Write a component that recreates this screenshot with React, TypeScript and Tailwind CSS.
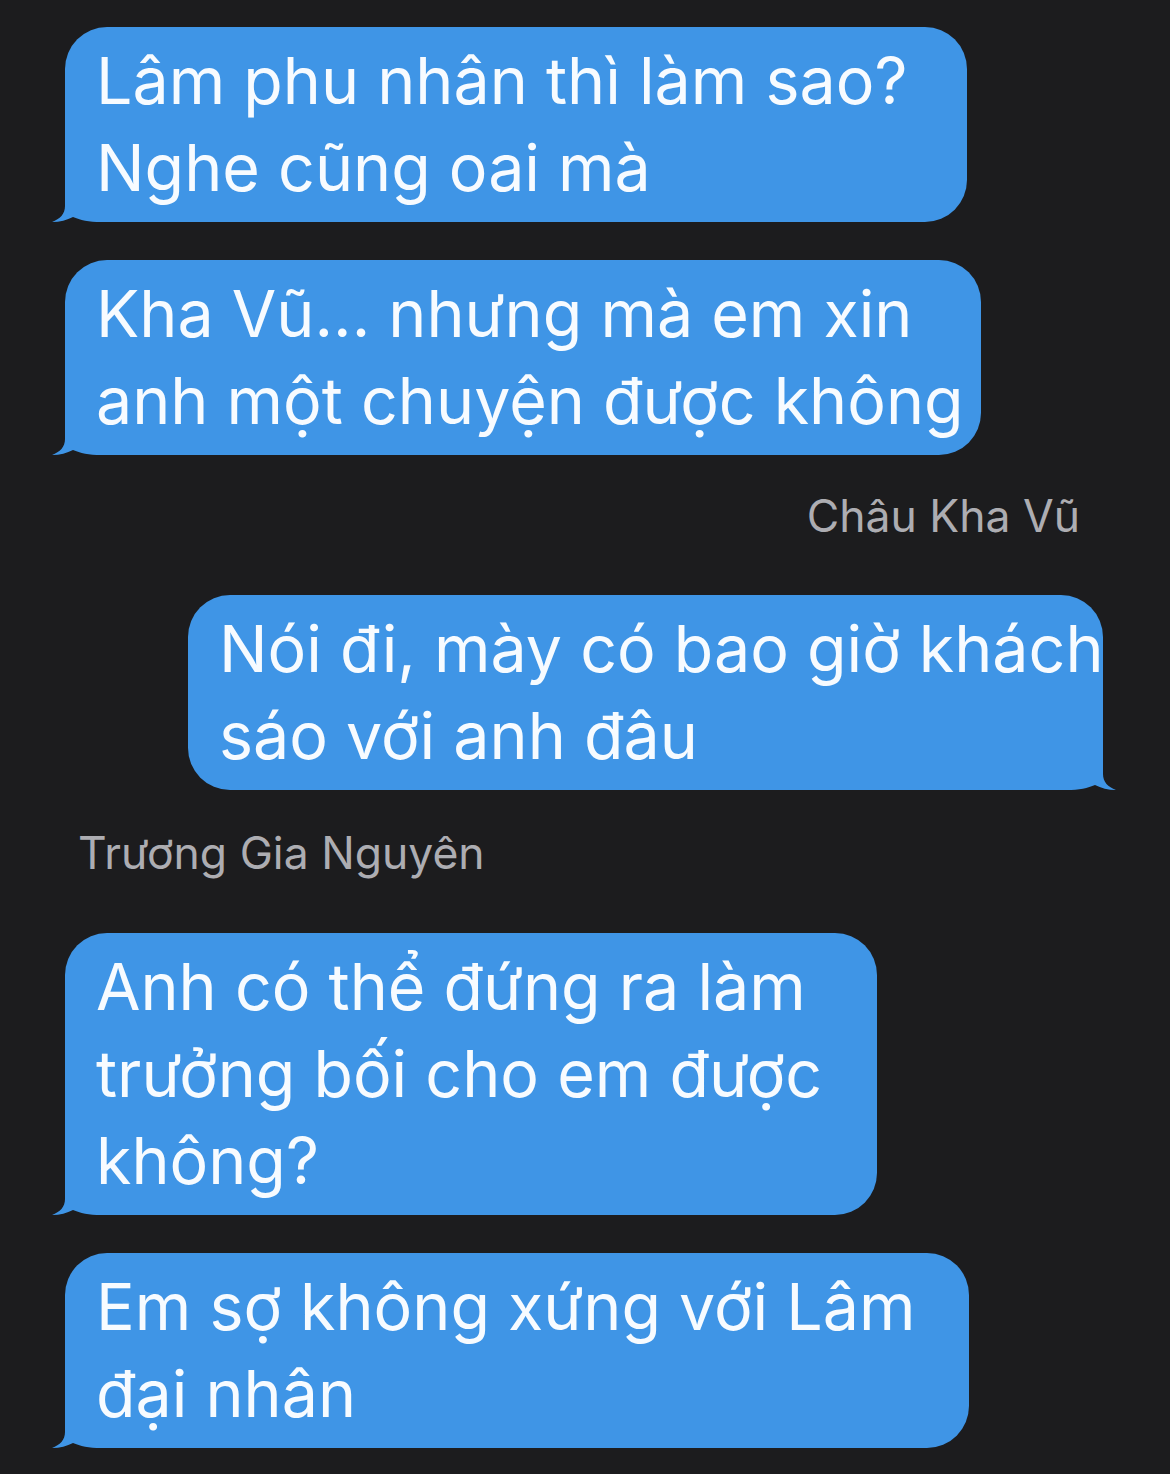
const BLUE = "#3f95e6";

function Tail({ side }: { side: "left" | "right" }) {
  return (
    <svg
      width="70"
      height="50"
      viewBox="0 0 70 50"
      className={
        side === "left"
          ? "absolute bottom-0 left-[-14px]"
          : "absolute bottom-0 right-[-14px] -scale-x-100"
      }
    >
      <path
        d="M14,0 L14,34 C14,42 9,47 1,50 C9,50 16,48 22,45 C29,48 38,50 50,50 L60,50 L60,0 Z"
        fill={BLUE}
      />
    </svg>
  );
}

function Bubble({
  lines,
  side = "left",
  width,
  className = "",
}: {
  lines: string[];
  side?: "left" | "right";
  width: string;
  className?: string;
}) {
  return (
    <div
      className={`relative rounded-[42px] bg-[#3f95e6] pl-[31px] pt-[11px] pb-[10px] text-[64.5px] leading-[87px] text-[#f7fbff] whitespace-nowrap ${width} ${className}`}
    >
      <div className="relative z-10">
        {lines.map((l) => (
          <div key={l}>{l}</div>
        ))}
      </div>
      <Tail side={side} />
    </div>
  );
}

export default function App() {
  return (
    <div
      className="flex h-[1474px] w-[1170px] flex-col overflow-hidden bg-[#1c1c1e] pt-[27px]"
      style={{ fontFamily: "Inter, 'Noto Sans', sans-serif" }}
    >
      <Bubble
        width="w-[902px]"
        className="ml-[65px]"
        lines={["Lâm phu nhân thì làm sao?", "Nghe cũng oai mà"]}
      />
      <Bubble
        width="w-[916px]"
        className="ml-[65px] mt-[38px]"
        lines={["Kha Vũ... nhưng mà em xin", "anh một chuyện được không"]}
      />
      <div className="mr-[90px] mt-[35px] self-end text-[44.5px] leading-[52px] text-[#adadb2]">
        Châu Kha Vũ
      </div>
      <Bubble
        side="right"
        width="w-[915px]"
        className="mr-[67px] mt-[53px] self-end"
        lines={["Nói đi, mày có bao giờ khách", "sáo với anh đâu"]}
      />
      <div className="ml-[78px] mt-[37px] text-[44.5px] leading-[52px] text-[#adadb2]">
        Trương Gia Nguyên
      </div>
      <Bubble
        width="w-[812px]"
        className="ml-[65px] mt-[54px]"
        lines={["Anh có thể đứng ra làm", "trưởng bối cho em được", "không?"]}
      />
      <Bubble
        width="w-[904px]"
        className="ml-[65px] mt-[38px]"
        lines={["Em sợ không xứng với Lâm", "đại nhân"]}
      />
    </div>
  );
}
